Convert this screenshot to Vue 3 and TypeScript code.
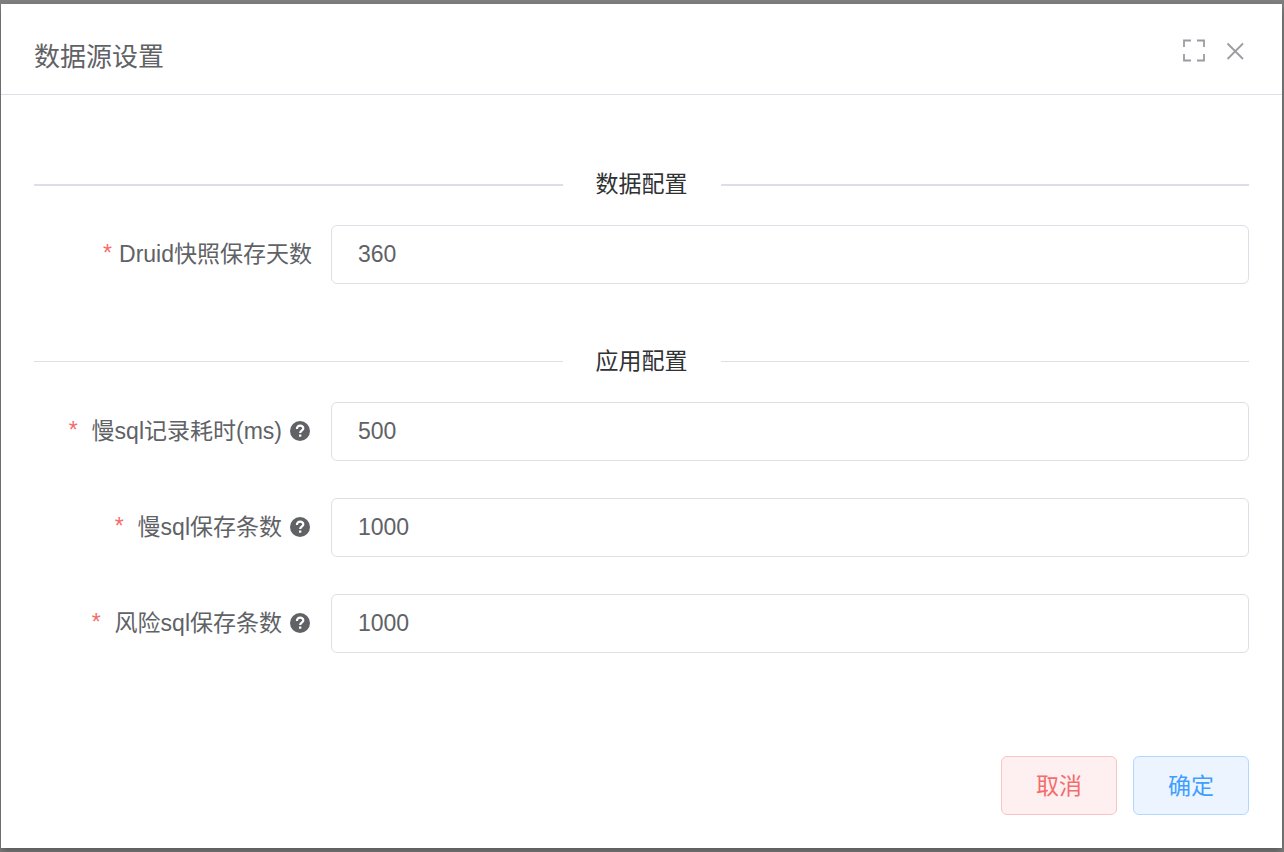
<script setup lang="ts">
import { reactive, ref } from 'vue'

interface Field {
  id: string
  label: string
  help: boolean
}

interface Section {
  title: string
  strong: boolean
  fields: Field[]
}

const open = ref(true)

const form = reactive<Record<string, string>>({
  snapshotDays: '360',
  slowSqlMillis: '500',
  slowSqlCount: '1000',
  riskSqlCount: '1000',
})

const sections: Section[] = [
  {
    title: '数据配置',
    strong: true,
    fields: [{ id: 'snapshotDays', label: 'Druid快照保存天数', help: false }],
  },
  {
    title: '应用配置',
    strong: false,
    fields: [
      { id: 'slowSqlMillis', label: '慢sql记录耗时(ms)', help: true },
      { id: 'slowSqlCount', label: '慢sql保存条数', help: true },
      { id: 'riskSqlCount', label: '风险sql保存条数', help: true },
    ],
  },
]

function close(): void {
  open.value = false
}
</script>

<template>
  <div class="overlay">
    <form v-if="open" class="dialog" role="dialog" aria-labelledby="dialog-title" @submit.prevent="close">
      <header class="header">
        <h1 id="dialog-title" class="title">数据源设置</h1>
        <div class="tools">
          <button type="button" class="tool" aria-label="全屏">
            <svg viewBox="0 0 24 24" width="24" height="24">
              <path d="M3 10V3.500H10M16 3.500H23V10M23 17V23.500H16M10 23.500H3V17" />
            </svg>
          </button>
          <button type="button" class="tool" aria-label="关闭" @click="close">
            <svg viewBox="0 0 24 24" width="24" height="24">
              <path d="M4.500 6.500L20 22M20 6.500L4.500 22" />
            </svg>
          </button>
        </div>
      </header>

      <main class="body">
        <section v-for="section in sections" :key="section.title" class="section">
          <h2 class="divider" :class="{ strong: section.strong }">{{ section.title }}</h2>
          <div class="fields">
            <div v-for="field in section.fields" :key="field.id" class="field">
              <label class="label" :class="{ helped: field.help }" :for="field.id">
                <span class="star">*</span>
                <span class="name">{{ field.label }}</span>
                <svg v-if="field.help" class="help" viewBox="0 0 20 20" width="20" height="20">
                  <circle cx="10" cy="10" r="10" />
                  <path d="M6.900 7.900C6.900 5.800 8.200 4.700 10.100 4.700C12 4.700 13.300 5.800 13.300 7.400C13.300 9.400 10.200 9.500 10.200 12.100" />
                  <rect x="9" y="13.500" width="2.300" height="2.200" />
                </svg>
              </label>
              <input :id="field.id" v-model="form[field.id]" class="input" type="text" required />
            </div>
          </div>
        </section>
      </main>

      <footer class="footer">
        <button type="button" class="btn danger" @click="close">取消</button>
        <button type="submit" class="btn primary">确定</button>
      </footer>
    </form>
  </div>
</template>

<style>
body {
  margin: 0;
  background: #7f7f7f;
}
</style>

<style scoped>
.overlay {
  box-sizing: border-box;
  display: flex;
  min-height: 100vh;
  padding: 4px 2px 4px 1px;
  overflow: hidden;
  background: #7f7f7f;
  font-family: "Liberation Sans", "Noto Sans CJK SC", sans-serif;
  font-size: 23px;
  font-weight: 400;
  color: #606266;
}

.dialog {
  display: flex;
  flex: 1;
  flex-direction: column;
  min-width: 0;
  background: #fff;
  box-shadow: 0 4px 8px rgba(0, 0, 0, 0.3);
}

.header {
  display: flex;
  justify-content: space-between;
  align-items: flex-start;
  padding: 33px 35px 17px 33px;
  border-bottom: 1px solid #dcdfe6;
}

.title {
  margin: 0;
  font-size: 26px;
  font-weight: 400;
  line-height: 40px;
}

.tools {
  display: flex;
  gap: 18px;
}

.tool {
  display: block;
  width: 24px;
  height: 24px;
  padding: 0;
  border: 0;
  background: none;
  cursor: pointer;
}

.tool svg {
  display: block;
  overflow: visible;
  fill: none;
  stroke: #9a9ca1;
  stroke-width: 1.800;
}

.body {
  display: flex;
  flex: 1;
  flex-direction: column;
  gap: 61px;
  padding: 73px 33px 32px;
}

.divider {
  display: flex;
  align-items: center;
  gap: 33px;
  margin: 0 0 24px;
  font-size: 23px;
  font-weight: 400;
  line-height: 33px;
  color: #303133;
}

.divider::before,
.divider::after {
  content: "";
  flex: 1;
  height: 1px;
  background: #dcdfe6;
}

.divider.strong::before,
.divider.strong::after {
  height: 2px;
}

.fields {
  display: flex;
  flex-direction: column;
  gap: 37px;
}

.field {
  display: grid;
  grid-template-columns: 278px 1fr;
  column-gap: 19px;
  align-items: center;
}

.label {
  display: flex;
  justify-content: flex-end;
  align-items: center;
  padding-bottom: 2px;
  line-height: 54px;
  white-space: nowrap;
}

.star {
  margin-right: 7px;
  padding-bottom: 2px;
  color: #f56c6c;
}

.helped {
  padding-right: 2px;
}

.helped .star {
  margin-right: 14px;
}

.help {
  margin-left: 8px;
  fill: #606266;
}

.help path {
  fill: none;
  stroke: #fff;
  stroke-width: 2.200;
}

.help rect {
  fill: #fff;
}

.input {
  box-sizing: border-box;
  width: 100%;
  min-width: 0;
  height: 59px;
  padding: 0 26px;
  border: 1px solid #dcdfe6;
  border-radius: 6px;
  outline: none;
  background: #fff;
  font: inherit;
  color: #606266;
}

.input:focus {
  border-color: #409eff;
}

.footer {
  display: flex;
  justify-content: flex-end;
  gap: 16px;
  padding: 0 33px 33px;
}

.btn {
  box-sizing: border-box;
  height: 59px;
  padding: 0 34px 4px;
  border: 1px solid;
  border-radius: 6px;
  font: inherit;
  cursor: pointer;
}

.danger {
  border-color: #fbc4c4;
  background: #fef0f0;
  color: #f56c6c;
}

.primary {
  border-color: #b3d8ff;
  background: #ecf5ff;
  color: #409eff;
}
</style>
